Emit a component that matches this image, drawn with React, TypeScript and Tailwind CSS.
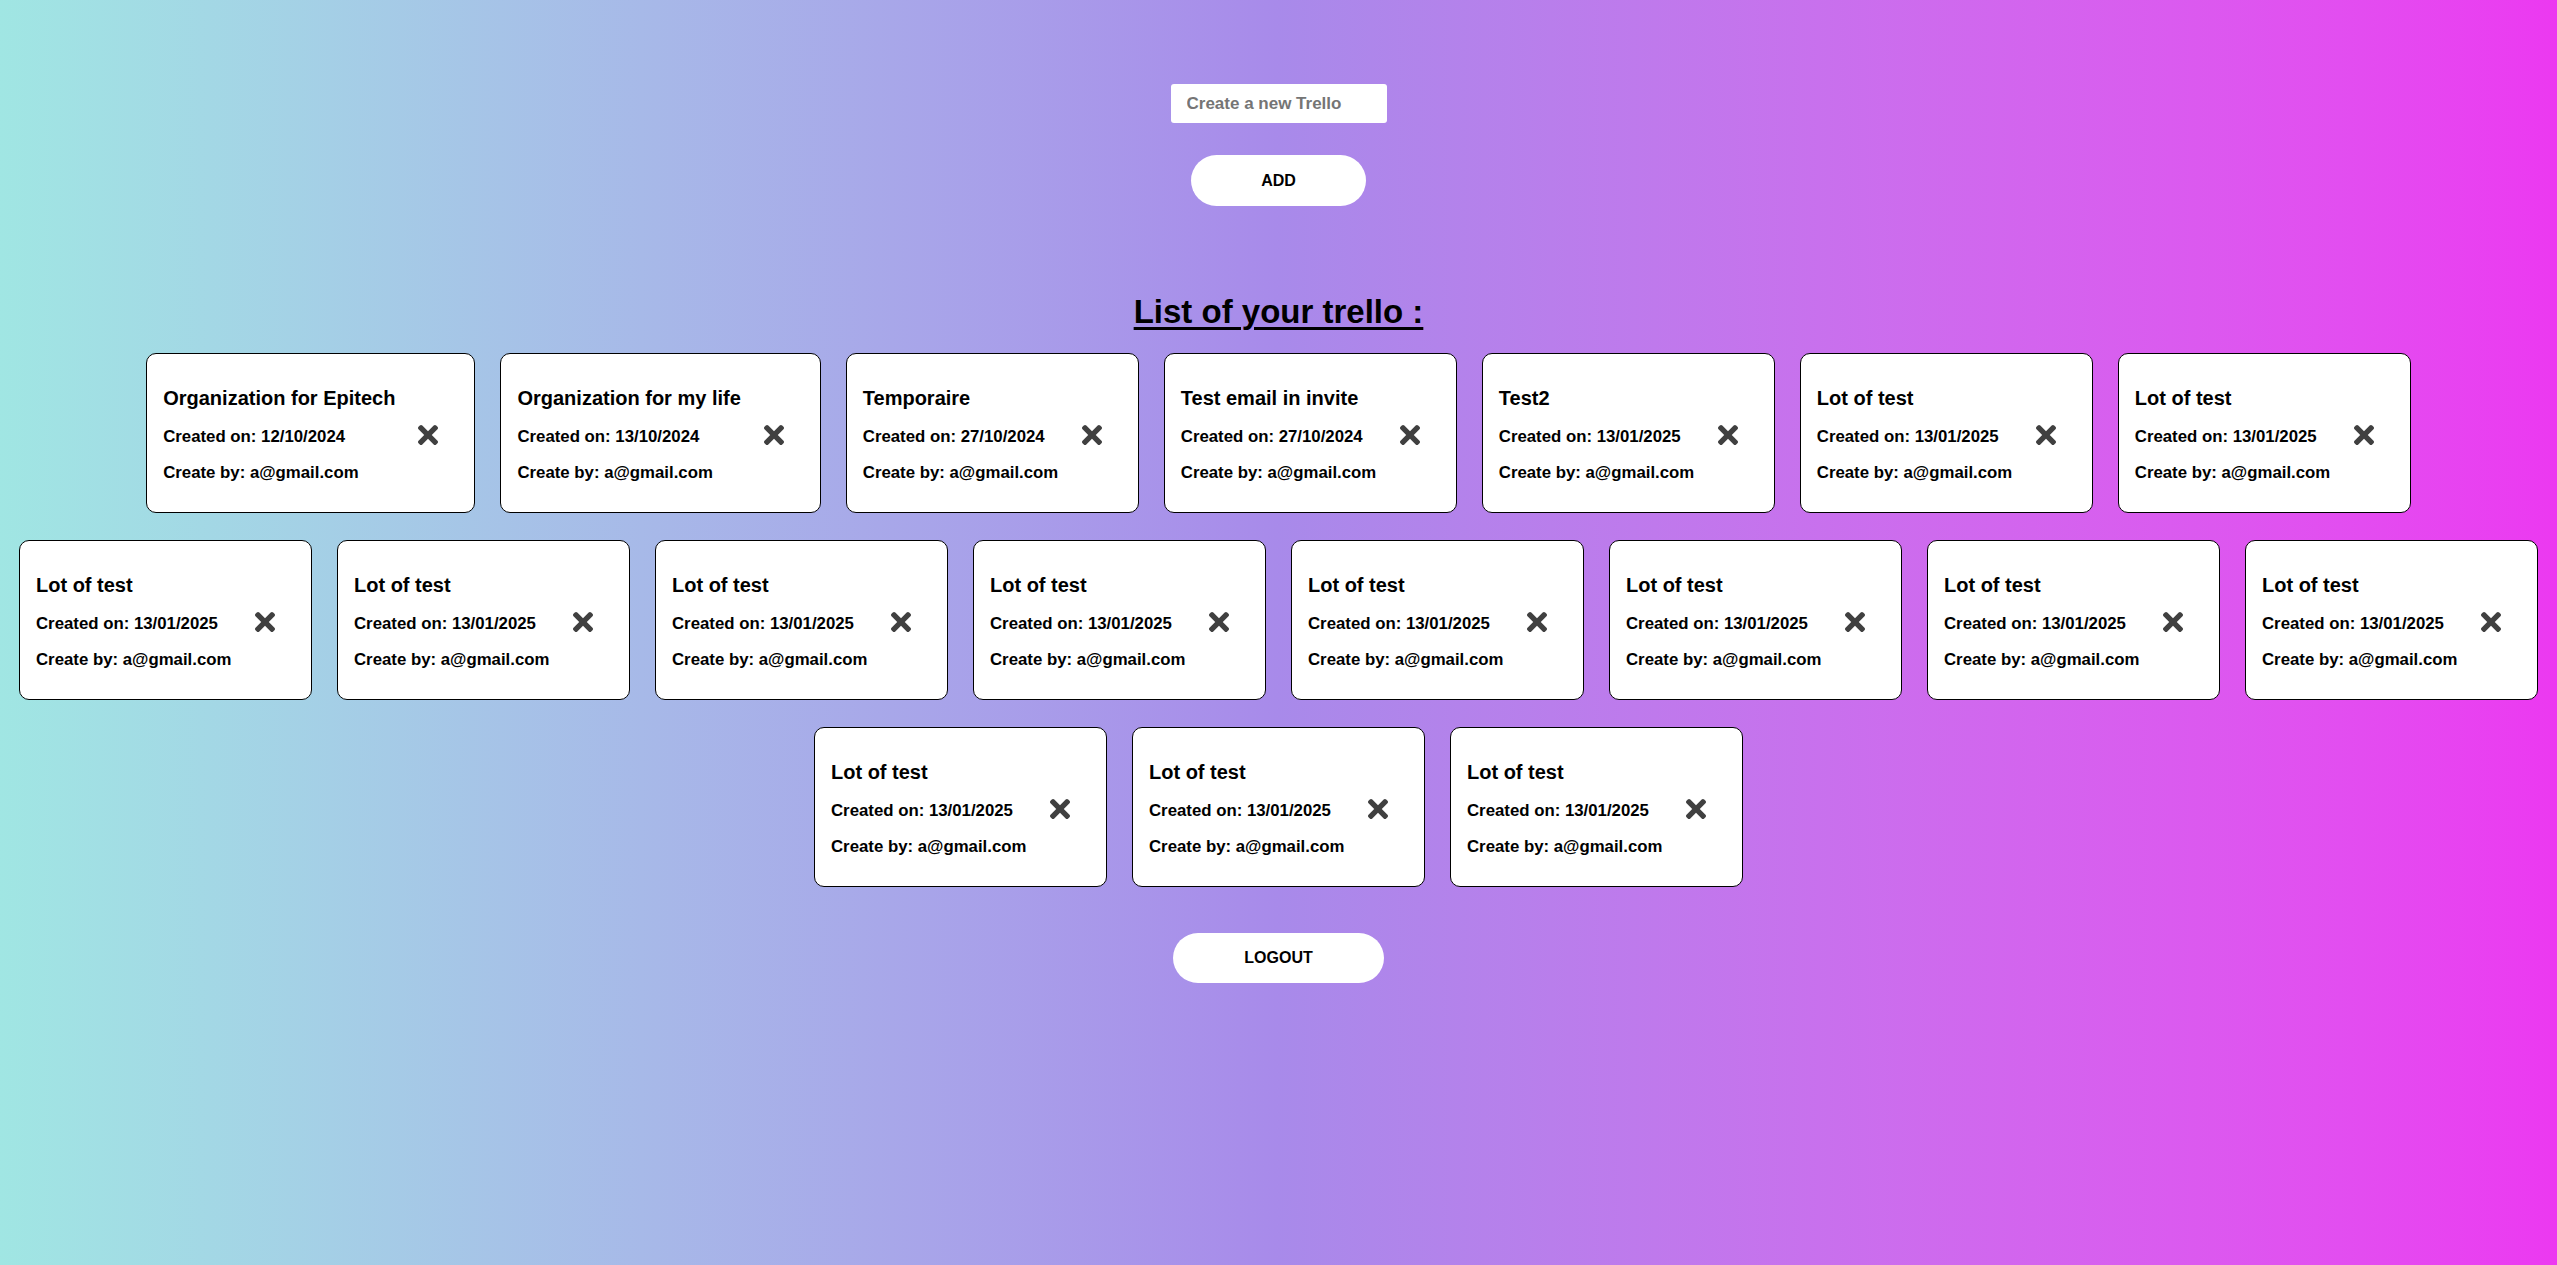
const trellos = [
  { name: "Organization for Epitech", date: "12/10/2024" },
  { name: "Organization for my life", date: "13/10/2024" },
  { name: "Temporaire", date: "27/10/2024" },
  { name: "Test email in invite", date: "27/10/2024" },
  { name: "Test2", date: "13/01/2025" },
  ...Array.from({ length: 13 }, () => ({ name: "Lot of test", date: "13/01/2025" })),
];

function CrossIcon() {
  return (
    <svg viewBox="0 80 352 352" className="h-[20px] w-[20px] shrink-0 fill-[#404040]">
      <path d="M242.72 256l100.07-100.07c12.28-12.28 12.28-32.19 0-44.48l-22.24-22.24c-12.28-12.28-32.19-12.28-44.48 0L176 189.28 75.93 89.21c-12.28-12.28-32.19-12.28-44.48 0L9.21 111.45c-12.28 12.28-12.28 32.19 0 44.48L109.28 256 9.21 356.07c-12.28 12.28-12.28 32.19 0 44.48l22.24 22.24c12.28 12.28 32.2 12.28 44.48 0L176 322.72l100.07 100.07c12.28 12.28 32.2 12.28 44.48 0l22.24-22.24c12.28-12.28 12.28-32.19 0-44.48L242.72 256z" />
    </svg>
  );
}

function TrelloCard({ name, date }: { name: string; date: string }) {
  return (
    <div className="flex min-w-[293px] items-center justify-between rounded-[10px] border border-black bg-white pl-[16px] pr-[36px] pt-[32px] pb-[28px]">
      <div className="flex flex-col">
        <h3 className="whitespace-nowrap text-[20px] font-bold leading-[24px] text-black">{name}</h3>
        <p className="mt-[16px] whitespace-nowrap text-[16.8px] font-bold leading-[22px] text-black">
          Created on: {date}
        </p>
        <p className="mt-[14px] whitespace-nowrap text-[16.8px] font-bold leading-[22px] text-black">
          Create by: a@gmail.com
        </p>
      </div>
      <button className="ml-[23px] cursor-pointer">
        <CrossIcon />
      </button>
    </div>
  );
}

export default function App() {
  return (
    <div className="flex min-h-screen w-full flex-col items-center bg-gradient-to-r from-[#a0e6e3] via-[#a88aea] to-[#ec38f1] pb-20 font-['Liberation_Sans',Arial,sans-serif]">
      <input
        type="text"
        placeholder="Create a new Trello"
        className="mt-[84px] h-[39px] w-[216px] rounded-[3px] bg-white pl-[16px] text-[17px] font-bold text-black outline-none placeholder:text-[#757575]"
      />

      <button className="mt-[32px] h-[51px] rounded-full bg-white px-[70px] text-[16px] font-bold text-black">
        ADD
      </button>

      <h2 className="mt-[86px] text-[33px] font-bold leading-[40px] text-black underline decoration-[3px] underline-offset-[4px]">
        List of your trello :
      </h2>

      <div className="mt-[21px] flex w-full flex-wrap justify-center gap-x-[25px] gap-y-[27px]">
        {trellos.map((t, i) => (
          <TrelloCard key={i} name={t.name} date={t.date} />
        ))}
      </div>

      <button className="mt-[46px] h-[50px] rounded-full bg-white px-[71px] text-[16px] font-bold text-black">
        LOGOUT
      </button>
    </div>
  );
}
